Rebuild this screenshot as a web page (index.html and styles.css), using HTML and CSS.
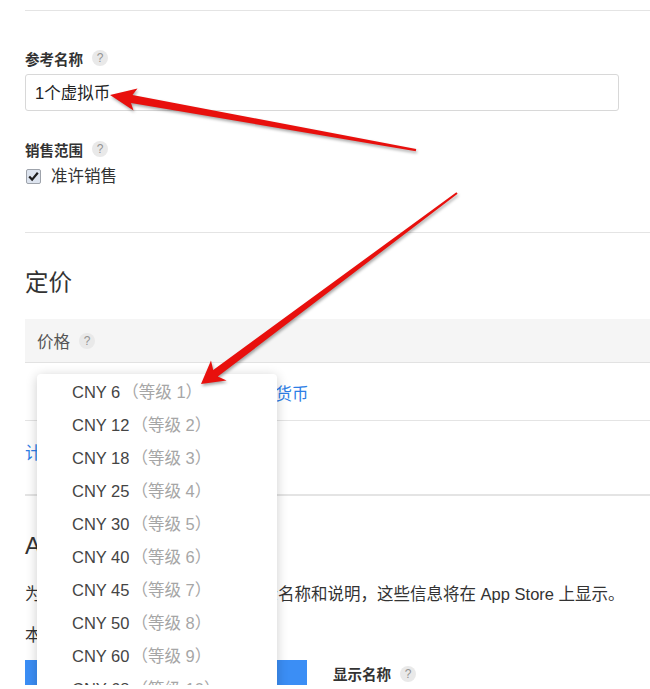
FILE: index.html
```html
<!DOCTYPE html>
<html lang="zh-CN">
<head>
  <meta charset="UTF-8">
  <meta name="viewport" content="width=device-width, initial-scale=1.0">
  <title>App 内购买项目 - 定价</title>
  <link rel="stylesheet" href="styles.css">
</head>
<body>
  <div class="page">

    <section class="group first">
      <div class="field">
        <div class="label">参考名称 <span class="help">?</span></div>
        <div class="input">1个虚拟币</div>
      </div>
      <div class="field sale">
        <div class="label">销售范围 <span class="help">?</span></div>
        <label class="check">
          <span class="box">
            <svg viewBox="0 0 15 15" width="15" height="15"><path d="M3.2 7.6 L6.1 10.6 L11.8 3.8" fill="none" stroke="#1d1d1d" stroke-width="2.2"/></svg>
          </span>
          准许销售
        </label>
      </div>
    </section>

    <section class="group pricing">
      <h2>定价</h2>
      <div class="thead">价格 <span class="help">?</span></div>
      <div class="row price-row">
        <div class="select">选择价格</div>
        <a class="link">所有价格和货币</a>
      </div>
      <div class="row plan-row">
        <a class="link">计划价格更改</a>
      </div>
    </section>

    <section class="group loc">
      <h2>App Store 本地化信息</h2>
      <p class="desc">为您的 App 内购买项目添加其显示名称和说明，这些信息将在 App Store 上显示。</p>
      <p class="desc lang">本地化</p>
      <div class="loc-row">
        <div class="tab"></div>
        <div class="label">显示名称 <span class="help">?</span></div>
      </div>
    </section>

    <!-- 打开的价格下拉菜单 -->
    <ul class="dropdown">
      <li>CNY 6<span class="tier">（等级 1）</span></li>
      <li>CNY 12<span class="tier">（等级 2）</span></li>
      <li>CNY 18<span class="tier">（等级 3）</span></li>
      <li>CNY 25<span class="tier">（等级 4）</span></li>
      <li>CNY 30<span class="tier">（等级 5）</span></li>
      <li>CNY 40<span class="tier">（等级 6）</span></li>
      <li>CNY 45<span class="tier">（等级 7）</span></li>
      <li>CNY 50<span class="tier">（等级 8）</span></li>
      <li>CNY 60<span class="tier">（等级 9）</span></li>
      <li>CNY 68<span class="tier">（等级 10）</span></li>
    </ul>

    <!-- 标注箭头 -->
    <svg class="arrows" viewBox="0 0 650 689" width="650" height="689">
      <polygon points="110,95 137.5,88.5 132.5,95 416.2,149 415.8,151.2 131,103 133.5,110.5" />
      <polygon points="201,384 211,360.5 213.2,370 456.4,192.2 457.6,193.8 217.8,376.6 226.5,380.5" />
    </svg>
  </div>
</body>
</html>
```

FILE: styles.css
```css
body {
  margin: 0;
  background: #fff;
  font-family: 'Liberation Sans', 'Noto Sans CJK SC', sans-serif;
  color: #333;
}

.page {
  position: relative;
  height: 685px;
  overflow: hidden;
  padding-top: 10px;
  box-sizing: border-box;
}

.group {
  border-top: 1px solid #e4e4e4;
  margin-left: 25px;
}

.first {
  padding: 37px 0 45px;
}

.label {
  display: flex;
  align-items: center;
  height: 20px;
  font-size: 14.5px;
  font-weight: bold;
  color: #333;
}

.help {
  display: inline-flex;
  align-items: center;
  justify-content: center;
  width: 16px;
  height: 16px;
  margin-left: 9px;
  border-radius: 50%;
  background: #e9e9e9;
  color: #939393;
  font-size: 12px;
  font-weight: normal;
}

.input {
  margin-top: 6px;
  width: 594px;
  height: 37px;
  box-sizing: border-box;
  border: 1px solid #d8d8d8;
  border-radius: 3px;
  padding: 2px 9px 0;
  line-height: 33px;
  font-size: 16.5px;
  color: #222;
}

.sale {
  margin-top: 28px;
}

.check {
  display: flex;
  align-items: center;
  margin-top: 4px;
  height: 24px;
  font-size: 16.5px;
  color: #333;
}

.box {
  display: inline-block;
  width: 15px;
  height: 15px;
  box-sizing: border-box;
  margin: 2px 10px 0 1px;
  border: 1px solid #9ea3ab;
  border-radius: 2px;
  background: #dde4ef;
}

.box svg {
  display: block;
  margin: -1px;
}

h2 {
  margin: 0;
  font-size: 23.5px;
  font-weight: normal;
  line-height: 30px;
  color: #333;
}

.pricing {
  padding-top: 35px;
}

.thead {
  display: flex;
  align-items: center;
  margin-top: 21px;
  height: 43px;
  padding-left: 12px;
  background: #f5f5f5;
  border-bottom: 1px solid #e2e2e2;
  font-size: 16.5px;
  color: #555;
}

.row {
  border-bottom: 1px solid #e4e4e4;
}

.price-row {
  display: flex;
  align-items: center;
  gap: 8px;
  height: 58px;
  padding: 4px 0 0 12px;
  box-sizing: border-box;
}

.select {
  width: 148px;
  font-size: 16px;
  color: #333;
}

.link {
  color: #2d7ee6;
  font-size: 16.5px;
  line-height: 24px;
}

.plan-row {
  padding: 20px 0 29px;
}

.plan-row .link {
  display: block;
}

.loc {
  padding-top: 35px;
}

.desc {
  margin: 21px 0 0;
  font-size: 16.5px;
  line-height: 24px;
  color: #333;
  white-space: nowrap;
}

.lang {
  margin-top: 17px;
}

.loc-row {
  display: flex;
  align-items: center;
  gap: 26px;
  margin-top: 13px;
}

.tab {
  width: 282px;
  height: 25px;
  background: #3b8ef5;
}

.loc-row .label {
  margin-top: 2px;
}

.dropdown {
  position: absolute;
  left: 37px;
  top: 374px;
  width: 240px;
  margin: 0;
  padding: 2px 0 0;
  list-style: none;
  background: #fff;
  border-radius: 4px;
  box-shadow: 0 2px 12px rgba(0,0,0,0.2);
}

.dropdown li {
  height: 33px;
  line-height: 33px;
  padding-left: 35px;
  font-size: 16.5px;
  color: #444;
  white-space: nowrap;
}

.tier {
  margin-left: 2px;
  color: #a6a6a6;
}

.arrows {
  position: absolute;
  left: 0;
  top: 0;
  pointer-events: none;
  fill: #e8100d;
  filter: drop-shadow(1px 2px 1.5px rgba(0,0,0,0.35));
}
```
